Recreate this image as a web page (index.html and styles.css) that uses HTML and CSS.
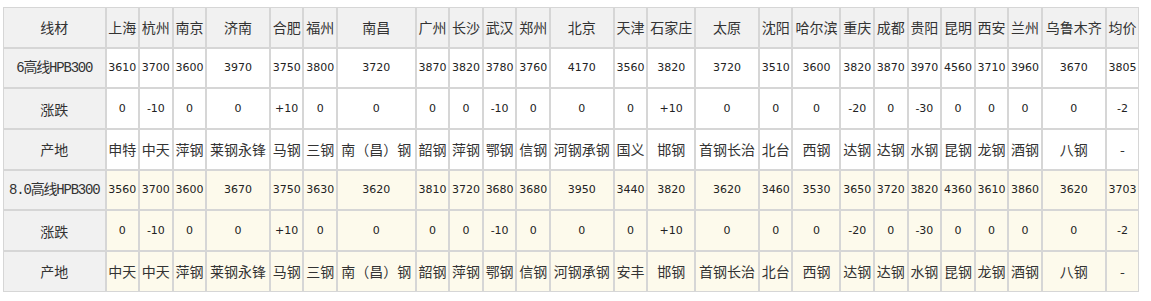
FILE: index.html
```html
<!DOCTYPE html>
<html lang="zh-CN">
<head>
<meta charset="utf-8">
<title>线材价格</title>
<link rel="stylesheet" href="styles.css">
</head>
<body>
<table class="price">
  <colgroup>
    <col class="w-label">
    <col class="w-n"><col class="w-n"><col class="w-n"><col class="w-4">
    <col class="w-n"><col class="w-n"><col class="w-5"><col class="w-n">
    <col class="w-n"><col class="w-n"><col class="w-n"><col class="w-4">
    <col class="w-n"><col class="w-3"><col class="w-4"><col class="w-n">
    <col class="w-3"><col class="w-n"><col class="w-n"><col class="w-n">
    <col class="w-n"><col class="w-n"><col class="w-n"><col class="w-4">
    <col class="w-n">
  </colgroup>
  <thead>
    <tr>
      <th>线材</th><th>上海</th><th>杭州</th><th>南京</th><th>济南</th><th>合肥</th><th>福州</th><th>南昌</th><th>广州</th><th>长沙</th><th>武汉</th><th>郑州</th><th>北京</th><th>天津</th><th>石家庄</th><th>太原</th><th>沈阳</th><th>哈尔滨</th><th>重庆</th><th>成都</th><th>贵阳</th><th>昆明</th><th>西安</th><th>兰州</th><th>乌鲁木齐</th><th>均价</th>
    </tr>
  </thead>
  <tbody>
    <tr class="num">
      <td class="label code">6高线HPB300</td><td>3610</td><td>3700</td><td>3600</td><td>3970</td><td>3750</td><td>3800</td><td>3720</td><td>3870</td><td>3820</td><td>3780</td><td>3760</td><td>4170</td><td>3560</td><td>3820</td><td>3720</td><td>3510</td><td>3600</td><td>3820</td><td>3870</td><td>3970</td><td>4560</td><td>3710</td><td>3960</td><td>3670</td><td>3805</td>
    </tr>
    <tr class="num">
      <td class="label">涨跌</td><td>0</td><td>-10</td><td>0</td><td>0</td><td>+10</td><td>0</td><td>0</td><td>0</td><td>0</td><td>-10</td><td>0</td><td>0</td><td>0</td><td>+10</td><td>0</td><td>0</td><td>0</td><td>-20</td><td>0</td><td>-30</td><td>0</td><td>0</td><td>0</td><td>0</td><td>-2</td>
    </tr>
    <tr>
      <td class="label">产地</td><td>申特</td><td>中天</td><td>萍钢</td><td>莱钢永锋</td><td>马钢</td><td>三钢</td><td>南（昌）钢</td><td>韶钢</td><td>萍钢</td><td>鄂钢</td><td>信钢</td><td>河钢承钢</td><td>国义</td><td>邯钢</td><td>首钢长治</td><td>北台</td><td>西钢</td><td>达钢</td><td>达钢</td><td>水钢</td><td>昆钢</td><td>龙钢</td><td>酒钢</td><td>八钢</td><td>-</td>
    </tr>
    <tr class="num alt">
      <td class="label code">8.0高线HPB300</td><td>3560</td><td>3700</td><td>3600</td><td>3670</td><td>3750</td><td>3630</td><td>3620</td><td>3810</td><td>3720</td><td>3680</td><td>3680</td><td>3950</td><td>3440</td><td>3820</td><td>3620</td><td>3460</td><td>3530</td><td>3650</td><td>3720</td><td>3820</td><td>4360</td><td>3610</td><td>3860</td><td>3620</td><td>3703</td>
    </tr>
    <tr class="num alt">
      <td class="label">涨跌</td><td>0</td><td>-10</td><td>0</td><td>0</td><td>+10</td><td>0</td><td>0</td><td>0</td><td>0</td><td>-10</td><td>0</td><td>0</td><td>0</td><td>+10</td><td>0</td><td>0</td><td>0</td><td>-20</td><td>0</td><td>-30</td><td>0</td><td>0</td><td>0</td><td>0</td><td>-2</td>
    </tr>
    <tr class="alt">
      <td class="label">产地</td><td>中天</td><td>中天</td><td>萍钢</td><td>莱钢永锋</td><td>马钢</td><td>三钢</td><td>南（昌）钢</td><td>韶钢</td><td>萍钢</td><td>鄂钢</td><td>信钢</td><td>河钢承钢</td><td>安丰</td><td>邯钢</td><td>首钢长治</td><td>北台</td><td>西钢</td><td>达钢</td><td>达钢</td><td>水钢</td><td>昆钢</td><td>龙钢</td><td>酒钢</td><td>八钢</td><td>-</td>
    </tr>
  </tbody>
</table>
</body>
</html>
```

FILE: styles.css
```css
html, body {
  background: #ffffff;
}
body {
  margin: 0;
  padding: 7px 0 0 3px;
  font-family: "Noto Sans CJK SC", sans-serif;
  font-size: 14px;
  color: #333333;
}
.price {
  border-collapse: separate;
  border-spacing: 0;
  table-layout: fixed;
  width: 1136.3px;
}
.w-label { width: 102.5px; }
.w-n { width: 33.57px; }
.w-3 { width: 48px; }
.w-4 { width: 63.7px; }
.w-5 { width: 78.7px; }
.price th,
.price td {
  box-sizing: border-box;
  height: 40.7px;
  padding: 0;
  border: 1px solid #d6d6d6;
  text-align: center;
  vertical-align: middle;
  font-weight: normal;
  white-space: nowrap;
  overflow: hidden;
  line-height: 18px;
}
.price thead th {
  background: #f1f1f1;
}
.price .num td {
  font-family: "DejaVu Sans", sans-serif;
  font-size: 11px;
  color: #222222;
}
.price .alt td {
  background: #fdfaec;
}
.price td.label {
  background: #f1f1f1;
  font-family: "Noto Sans CJK SC", sans-serif;
  font-size: 14px;
  color: #333333;
}
.price td.code {
  font-family: "Liberation Mono", "Noto Sans CJK SC", monospace;
  letter-spacing: -1.2px;
}
```
